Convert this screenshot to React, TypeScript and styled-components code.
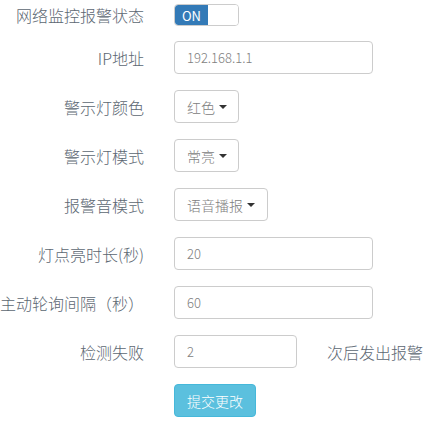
import styled, { createGlobalStyle } from "styled-components";

const GlobalStyle = createGlobalStyle`
  body {
    margin: 0;
    background: #fff;
    font-family: "Noto Sans CJK SC", "Liberation Sans", sans-serif;
  }
`;

const Form = styled.form`
  display: flex;
  flex-direction: column;
  padding-top: 4px;
`;

const Row = styled.div<{ $first?: boolean }>`
  display: flex;
  align-items: center;
  gap: 30px;
  height: ${(p) => (p.$first ? "22px" : "33px")};
  margin-bottom: ${(p) => (p.$first ? "15px" : "16px")};
`;

const Label = styled.label`
  flex: 0 0 144px;
  text-align: right;
  font-size: 16px;
  font-weight: 300;
  color: #5c6772;
  white-space: nowrap;
  line-height: 1;
`;

const Switch = styled.div`
  display: flex;
  width: 65px;
  height: 22px;
  box-sizing: border-box;
  border: 1px solid #ccc;
  border-radius: 4px;
  overflow: hidden;
`;

const SwitchOn = styled.span`
  width: 33px;
  background: #337ab7;
  color: #fff;
  font-size: 13px;
  display: flex;
  align-items: center;
  justify-content: center;
  border-radius: 3px 0 0 3px;
`;

const SwitchOff = styled.span`
  flex: 1;
  background: #fff;
`;

const Input = styled.input<{ $w: number }>`
  width: ${(p) => p.$w}px;
  height: 33px;
  box-sizing: border-box;
  padding: 0 12px;
  border: 1px solid #ccc;
  border-radius: 4px;
  font-family: inherit;
  font-size: 13px;
  font-weight: 300;
  color: #808080;
  outline: none;
  background: #fff;
`;

const Select = styled.button<{ $w: number }>`
  width: ${(p) => p.$w}px;
  height: 33px;
  box-sizing: border-box;
  padding: 0 0 0 12px;
  border: 1px solid #ccc;
  border-radius: 4px;
  background: #fff;
  font-family: inherit;
  font-size: 14px;
  font-weight: 300;
  color: #808080;
  display: flex;
  align-items: center;
  gap: 4px;
  white-space: nowrap;
`;

const Caret = styled.span`
  width: 0;
  height: 0;
  border-top: 4px solid #333;
  border-left: 4px solid transparent;
  border-right: 4px solid transparent;
`;

const Suffix = styled.span`
  font-size: 16px;
  font-weight: 300;
  color: #5c6772;
  white-space: nowrap;
`;

const Submit = styled.button`
  margin-left: 174px;
  width: 82px;
  height: 33px;
  border: 1px solid #46b8da;
  border-radius: 4px;
  background: #5bc0de;
  color: #fff;
  font-family: inherit;
  font-size: 14px;
  font-weight: 300;
  padding: 0;
`;

export default function App() {
  return (
    <>
      <GlobalStyle />
      <Form onSubmit={(e) => e.preventDefault()}>
        <Row $first>
          <Label>网络监控报警状态</Label>
          <Switch>
            <SwitchOn>ON</SwitchOn>
            <SwitchOff />
          </Switch>
        </Row>
        <Row>
          <Label>IP地址</Label>
          <Input $w={199} defaultValue="192.168.1.1" />
        </Row>
        <Row>
          <Label>警示灯颜色</Label>
          <Select type="button" $w={65}>
            红色
            <Caret />
          </Select>
        </Row>
        <Row>
          <Label>警示灯模式</Label>
          <Select type="button" $w={65}>
            常亮
            <Caret />
          </Select>
        </Row>
        <Row>
          <Label>报警音模式</Label>
          <Select type="button" $w={94}>
            语音播报
            <Caret />
          </Select>
        </Row>
        <Row>
          <Label>灯点亮时长(秒)</Label>
          <Input $w={199} defaultValue="20" />
        </Row>
        <Row>
          <Label>主动轮询间隔（秒）</Label>
          <Input $w={199} defaultValue="60" />
        </Row>
        <Row>
          <Label>检测失败</Label>
          <Input $w={123} defaultValue="2" />
          <Suffix>次后发出报警</Suffix>
        </Row>
        <Submit type="submit">提交更改</Submit>
      </Form>
    </>
  );
}
